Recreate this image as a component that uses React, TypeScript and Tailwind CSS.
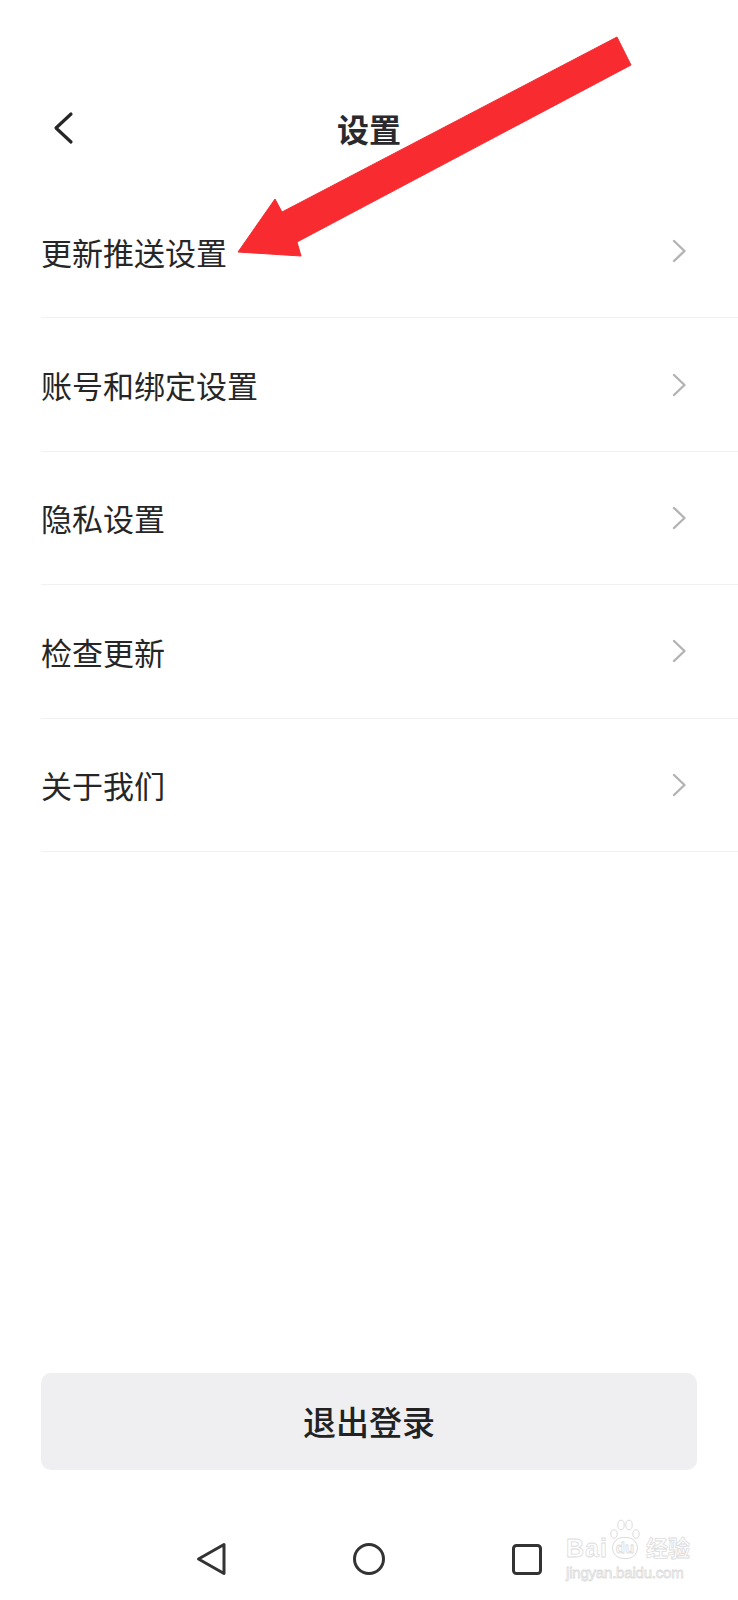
import React from "react";

const items = ["更新推送设置", "账号和绑定设置", "隐私设置", "检查更新", "关于我们"];

function ChevronRight() {
  return (
    <svg width="16" height="24" viewBox="0 0 16 24" fill="none">
      <path d="M3 2 L13.5 12 L3 22" stroke="#b3b3b3" strokeWidth="2.4" strokeLinecap="round" strokeLinejoin="round" />
    </svg>
  );
}

export default function App() {
  return (
    <div className="relative flex flex-col w-[738px] h-[1600px] bg-white overflow-hidden font-['Noto_Sans_CJK_SC','Noto_Sans',sans-serif] text-[#262626]">
      {/* header */}
      <header className="h-[185px] pt-[100px]">
        <div className="relative flex items-center justify-center h-[56px]">
          <button className="absolute left-[50px] top-1/2 -translate-y-1/2">
            <svg width="26" height="36" viewBox="0 0 26 36" fill="none">
              <path d="M21 4 L6 18 L21 32" stroke="#262626" strokeWidth="3.2" strokeLinecap="round" strokeLinejoin="round" />
            </svg>
          </button>
          <h1 className="text-[32px] leading-none font-bold text-[#2a2a2e]">设置</h1>
        </div>
      </header>

      {/* list */}
      <ul className="ml-[41px]">
        {items.map((label) => (
          <li key={label} className="h-[133.4px] flex items-center justify-between pr-[51px] border-b border-[#f1f1f1]">
            <span className="text-[31px] leading-none">{label}</span>
            <ChevronRight />
          </li>
        ))}
      </ul>

      {/* logout */}
      <div className="mt-auto px-[41px]">
        <button className="w-full h-[97px] rounded-[10px] bg-[#efeff1] flex items-center justify-center">
          <span className="text-[33px] leading-none font-medium text-[#222]">退出登录</span>
        </button>
      </div>

      {/* system nav */}
      <nav className="h-[130px] pt-[72px] flex justify-center gap-[126px]">
        <svg width="32" height="34" viewBox="0 0 32 34" fill="none">
          <path d="M29 2.5 L3.5 17 L29 31.5 Z" stroke="#333" strokeWidth="3" strokeLinejoin="round" />
        </svg>
        <svg width="32" height="34" viewBox="0 0 32 34" fill="none">
          <circle cx="16" cy="17" r="14.5" stroke="#333" strokeWidth="3" />
        </svg>
        <svg width="32" height="34" viewBox="0 0 32 34" fill="none">
          <rect x="2.5" y="3.5" width="27" height="28" rx="3" stroke="#333" strokeWidth="3" />
        </svg>
      </nav>

      {/* red annotation arrow */}
      <svg className="absolute inset-0 pointer-events-none" width="738" height="1600" viewBox="0 0 738 1600">
        <polygon
          points="617,37 631,65 297,242 301,256 238,252 275,199 282,212"
          fill="#f72b30"
          stroke="#f72b30"
          strokeWidth="1"
          strokeLinejoin="round"
        />
      </svg>

      {/* watermark */}
      <div className="absolute left-[566px] top-[1519px] flex flex-col items-start text-white [-webkit-text-stroke:0.8px_#dcdcdc] font-['Liberation_Sans','Noto_Sans_CJK_SC',sans-serif]">
        <div className="flex items-end h-[40px]">
          <span className="text-[25px] leading-none font-bold tracking-[1px] mb-[-2px]">Bai</span>
          <span className="relative flex items-end w-[34px] h-[40px] justify-center">
            <svg className="absolute left-0 top-0" width="34" height="24" viewBox="0 0 34 24" fill="none" stroke="#dcdcdc" strokeWidth="1">
              <ellipse cx="6" cy="15" rx="3.2" ry="4.2" />
              <ellipse cx="13" cy="6" rx="3.2" ry="4.8" />
              <ellipse cx="21" cy="6" rx="3.2" ry="4.8" />
              <ellipse cx="28" cy="15" rx="3.2" ry="4.2" />
            </svg>
            <span className="text-[15px] leading-none font-bold mb-[0px] rounded-full border border-[#dcdcdc] px-[3px] pt-[2px] pb-[3px]">du</span>
          </span>
          <span className="text-[22px] leading-none font-bold ml-[4px] mb-[-1px]">经验</span>
        </div>
        <span className="text-[15px] leading-none mt-[6px] tracking-[-0.2px]">jingyan.baidu.com</span>
      </div>
    </div>
  );
}
